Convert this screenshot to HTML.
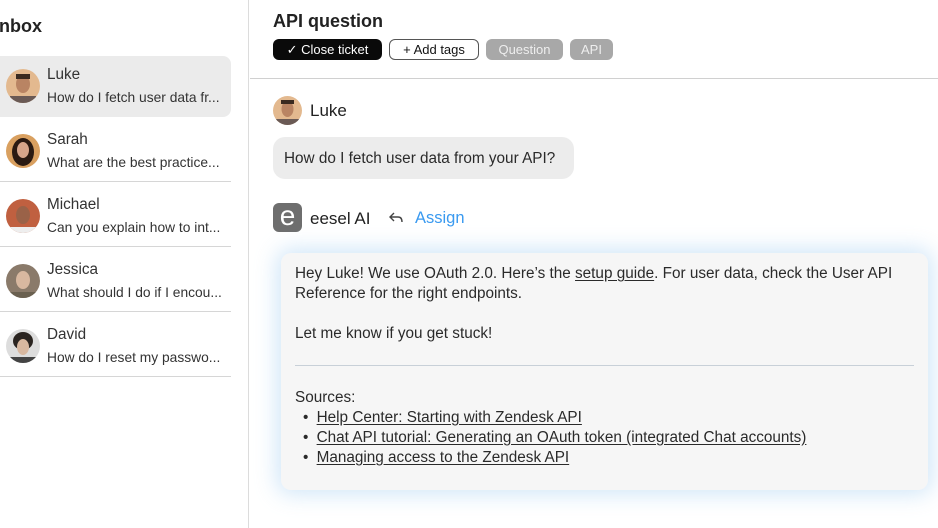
<!DOCTYPE html>
<html><head><meta charset="utf-8"><style>
*{box-sizing:border-box;margin:0;padding:0}
body{width:938px;height:528px;overflow:hidden;background:#fff;font-family:"Liberation Sans",sans-serif;color:#222;position:relative}
.side{position:absolute;left:0;top:0;width:249px;height:528px;border-right:1px solid #dcdcdc}
.inbox{position:absolute;left:-6px;top:16px;font-size:18px;font-weight:bold;color:#222}
.item{position:absolute;left:0;width:231px;height:61px}
.item.sel{background:#ebebeb;border-radius:0 8px 8px 0}
.sep{position:absolute;left:0;width:231px;height:1px;background:#d6d6d6}
.av{position:absolute;left:6px;top:13px;width:34px;height:34px;border-radius:50%;overflow:hidden}
.nm{position:absolute;left:47px;top:10px;font-size:15.3px;color:#333}
.pv{position:absolute;left:47px;top:34px;font-size:13.8px;color:#333;white-space:nowrap}
.title{position:absolute;left:273px;top:11px;font-size:18px;font-weight:bold;color:#222}
.btn{position:absolute;top:39px;height:21px;border-radius:6px;font-size:13px;line-height:21px;text-align:center}
.hr{position:absolute;left:250px;top:78px;width:688px;height:1px;background:#d0d0d0}
.card{position:absolute;left:281px;top:253px;width:647px;height:237px;background:#f6f6f6;border-radius:10px;box-shadow:0 0 22px 4px rgba(150,200,240,.45);padding:11px 14px;font-size:15.3px;color:#2a2a2a;line-height:20px}
.card u{text-decoration:underline;text-underline-offset:2px}
</style></head><body>
<div class="side">
<div class="inbox">Inbox</div>
<div class="item sel" style="top:56px"><div class="av"><svg width="34" height="34"><rect width="34" height="34" fill="#e3b98f"/><ellipse cx="17" cy="15" rx="7" ry="9" fill="#b98463"/><rect x="10" y="5" width="14" height="5" fill="#3a2a20"/><rect x="4" y="27" width="26" height="8" fill="#6a5a55"/></svg></div><div class="nm">Luke</div><div class="pv">How do I fetch user data fr...</div></div>
<div class="item" style="top:121px"><div class="av"><svg width="34" height="34"><rect width="34" height="34" fill="#d9a060"/><ellipse cx="17" cy="18" rx="11" ry="14" fill="#2a1a12"/><ellipse cx="17" cy="16" rx="6" ry="8" fill="#d6a58a"/></svg></div><div class="nm">Sarah</div><div class="pv">What are the best practice...</div></div>
<div class="sep" style="top:181px"></div>
<div class="item" style="top:186px"><div class="av"><svg width="34" height="34"><rect width="34" height="34" fill="#c06040"/><ellipse cx="17" cy="16" rx="7" ry="9" fill="#9a6248"/><rect x="4" y="28" width="26" height="8" fill="#eee"/></svg></div><div class="nm">Michael</div><div class="pv">Can you explain how to int...</div></div>
<div class="sep" style="top:246px"></div>
<div class="item" style="top:251px"><div class="av"><svg width="34" height="34"><rect width="34" height="34" fill="#8a7a6a"/><ellipse cx="17" cy="16" rx="7" ry="9" fill="#d8b8a0"/><rect x="4" y="28" width="26" height="8" fill="#6a6050"/></svg></div><div class="nm">Jessica</div><div class="pv">What should I do if I encou...</div></div>
<div class="sep" style="top:311px"></div>
<div class="item" style="top:316px"><div class="av"><svg width="34" height="34"><rect width="34" height="34" fill="#ddd"/><ellipse cx="17" cy="12" rx="10" ry="9" fill="#2a2420"/><ellipse cx="17" cy="18" rx="6" ry="8" fill="#d8b8a0"/><rect x="4" y="28" width="26" height="8" fill="#444"/></svg></div><div class="nm">David</div><div class="pv">How do I reset my passwo...</div></div>
<div class="sep" style="top:376px"></div>
</div>

<div class="title">API question</div>
<div class="btn" style="left:273px;width:109px;background:#0a0a0a;color:#fff">✓ Close ticket</div>
<div class="btn" style="left:389px;width:90px;border:1px solid #555;color:#111;line-height:19px">+ Add tags</div>
<div class="btn" style="left:486px;width:77px;background:#a8a8a8;color:#eee">Question</div>
<div class="btn" style="left:570px;width:43px;background:#a8a8a8;color:#eee">API</div>
<div class="hr"></div>

<div style="position:absolute;left:273px;top:96px;width:29px;height:29px;border-radius:50%;overflow:hidden"><svg width="29" height="29"><rect width="29" height="29" fill="#e3b98f"/><ellipse cx="14.5" cy="13" rx="6" ry="8" fill="#b98463"/><rect x="8" y="4" width="13" height="4" fill="#3a2a20"/><rect x="3" y="23" width="23" height="7" fill="#6a5a55"/></svg></div>
<div style="position:absolute;left:310px;top:101px;font-size:17px;color:#222">Luke</div>
<div style="position:absolute;left:273px;top:137px;width:301px;height:42px;background:#ececec;border-radius:12px;padding:12px 11px;font-size:15.3px;line-height:20px;color:#2a2a2a">How do I fetch user data from your API?</div>

<div style="position:absolute;left:273px;top:203px;width:29px;height:29px;border-radius:6px;background:#6e6e6e;color:#fff;font-size:28px;line-height:26px;text-align:center">e</div>
<div style="position:absolute;left:310px;top:209px;font-size:17px;color:#222">eesel AI</div>
<svg style="position:absolute;left:388px;top:211px" width="16" height="14"><path d="M6 2 L2 6 L6 10 M2 6 H10 Q14 6 14 11" fill="none" stroke="#444" stroke-width="1.4"/></svg>
<div style="position:absolute;left:415px;top:209px;font-size:16.5px;color:#3a9af0">Assign</div>

<div class="card">
Hey Luke! We use OAuth 2.0. Here’s the <u>setup guide</u>. For user data, check the User API<br>Reference for the right endpoints.<br><br>Let me know if you get stuck!
<div style="height:1px;background:#c8d0d8;margin:21px 0 22px"></div>
Sources:
<div style="padding-left:8px">• <u style="margin-left:4px">Help Center: Starting with Zendesk API</u><br>• <u style="margin-left:4px">Chat API tutorial: Generating an OAuth token (integrated Chat accounts)</u><br>• <u style="margin-left:4px">Managing access to the Zendesk API</u></div>
</div>
</body></html>
